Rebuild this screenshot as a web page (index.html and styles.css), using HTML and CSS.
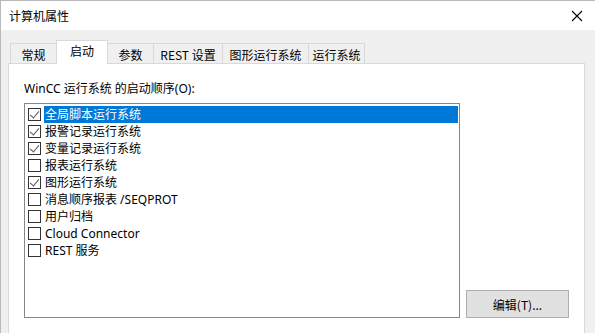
FILE: index.html
```html
<!DOCTYPE html>
<html>
<head>
<meta charset="utf-8">
<link rel="stylesheet" href="styles.css">
</head>
<body>
<div class="window">
  <div class="titlebar">
    <span class="title">计算机属性</span>
    <svg class="close" width="12" height="12" viewBox="0 0 12 12"><path d="M1 1 L11 11 M11 1 L1 11" stroke="#000" stroke-width="1.1" fill="none"/></svg>
  </div>
  <div class="body">
    <div class="tabs">
      <div class="tab t1">常规</div>
      <div class="tab active t2">启动</div>
      <div class="tab t3">参数</div>
      <div class="tab t4">REST 设置</div>
      <div class="tab t5">图形运行系统</div>
      <div class="tab t6">运行系统</div>
    </div>
    <div class="panel">
      <div class="label">WinCC 运行系统 的启动顺序(O):</div>
      <div class="content">
        <div class="list">
          <div class="row sel"><span class="cb checked"></span><span class="txt">全局脚本运行系统</span></div>
          <div class="row"><span class="cb checked"></span><span class="txt">报警记录运行系统</span></div>
          <div class="row"><span class="cb checked"></span><span class="txt">变量记录运行系统</span></div>
          <div class="row"><span class="cb"></span><span class="txt">报表运行系统</span></div>
          <div class="row"><span class="cb checked"></span><span class="txt">图形运行系统</span></div>
          <div class="row"><span class="cb"></span><span class="txt">消息顺序报表 /SEQPROT</span></div>
          <div class="row"><span class="cb"></span><span class="txt">用户归档</span></div>
          <div class="row"><span class="cb"></span><span class="txt">Cloud Connector</span></div>
          <div class="row"><span class="cb"></span><span class="txt">REST 服务</span></div>
        </div>
        <div class="side">
          <button class="btn">编辑(T)...</button>
        </div>
      </div>
    </div>
  </div>
</div>
</body>
</html>
```
FILE: styles.css
```css
* { box-sizing: border-box; }
html, body { margin: 0; padding: 0; }
body {
  width: 595px; height: 333px; overflow: hidden;
  font-family: "Noto Sans", "Noto Sans CJK SC", sans-serif;
  font-size: 12px; color: #000;
  background: #f0f0f0;
}
.window {
  width: 595px; height: 333px;
  border-top: 1px solid #b9b9b9;
  border-left: 1px solid #b9b9b9;
  background: #f0f0f0;
}
.titlebar {
  height: 29px; background: #fff;
  display: flex; align-items: center; justify-content: space-between;
  padding: 0 12px 0 8px;
}
.title { font-family: "Noto Sans CJK SC", sans-serif; font-size: 12px; line-height: 14px; }
.close { display: block; }
.body { padding: 10px 10px 0 7px; }
.tabs { display: flex; align-items: flex-end; height: 24px; padding-left: 2px; }
.tab {
  height: 21px; background: #f0f0f0;
  border: 1px solid #d9d9d9; border-bottom: none;
  margin-left: -1px;
  font-family: "Noto Sans CJK SC", "Noto Sans", sans-serif;
  display: flex; align-items: center; justify-content: center;
  line-height: 14px; padding-top: 1px;
}
.tab.active {
  height: 24px; background: #fff;
  position: relative; z-index: 2;
  padding-top: 0; padding-bottom: 3px;
}
.t1 { width: 47px; margin-left: 0; }
.t2 { width: 52px; }
.t3 { width: 47px; }
.t4 { width: 70px; }
.t5 { width: 87px; }
.t6 { width: 57px; }
.panel {
  background: #fff; border: 1px solid #d9d9d9;
  width: 577px; height: 280px; margin-top: -1px;
  padding: 17px 0 0 15px;
  position: relative; z-index: 1;
}
.label { font-family: "Noto Sans", "Noto Sans CJK SC", sans-serif; line-height: 16px; height: 17px; }
.content { display: flex; margin-top: 5px; }
.list {
  width: 436px; height: 215px;
  border: 1px solid #828790;
  padding: 2px 1px 0 2px;
}
.row { display: flex; align-items: center; height: 17px; }
.cb {
  width: 13px; height: 13px; border: 1px solid #333;
  margin-right: 3px; margin-left: 1px; background: #fff; flex: none;
  position: relative;
}
.cb.checked::after {
  content: ""; position: absolute;
  left: 3px; top: 0px; width: 4px; height: 8px;
  border: solid #555; border-width: 0 1.3px 1.3px 0;
  transform: rotate(40deg);
}
.txt {
  font-family: "Noto Sans", "Noto Sans CJK SC", sans-serif;
  line-height: 17px; height: 17px; flex: 1; padding-left: 1px;
}
.row.sel .txt { background: #0078d7; color: #fff; }
.side { flex: 1; display: flex; align-items: flex-end; justify-content: flex-start; padding-left: 6px; padding-bottom: 0; }
.btn {
  width: 103px; height: 28px;
  background: #e1e1e1; border: 1px solid #adadad;
  font-family: "Noto Sans CJK SC", "Noto Sans", sans-serif; font-size: 12px;
  color: #000; padding: 0; margin: 0;
}
```
